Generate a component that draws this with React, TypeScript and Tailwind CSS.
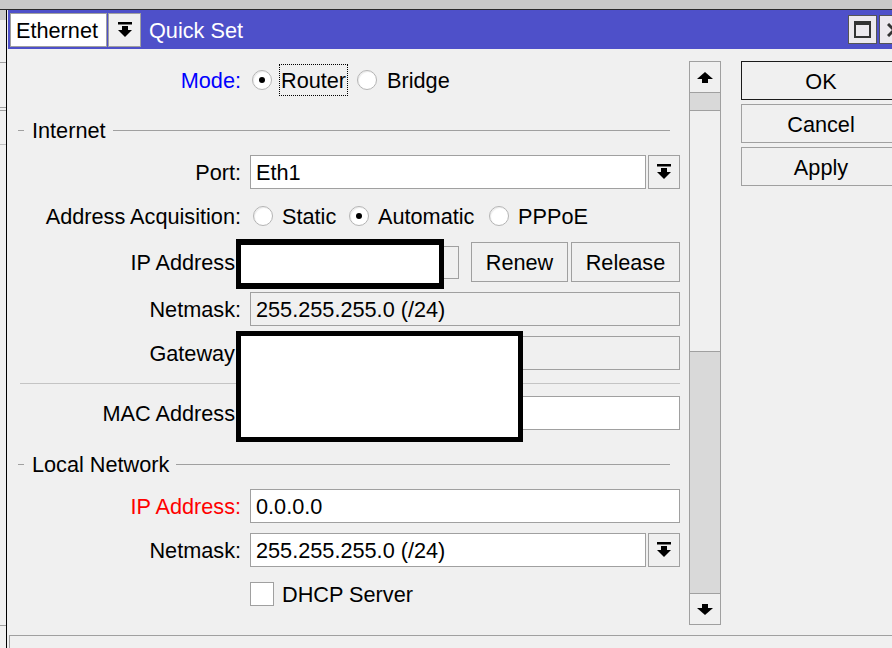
import React from "react";

function DropIcon() {
  return (
    <svg width="14" height="16" viewBox="0 0 14 16">
      <rect x="0" y="0" width="14" height="2.5" fill="#000" />
      <rect x="4" y="4" width="6" height="4" fill="#000" />
      <polygon points="0,8 14,8 7,15" fill="#000" />
    </svg>
  );
}

function ArrowUp() {
  return (
    <svg width="16" height="11" viewBox="0 0 16 11">
      <polygon points="0,7 8,0 16,7" fill="#000" />
      <rect x="5" y="7" width="6" height="4" fill="#000" />
    </svg>
  );
}

function ArrowDown() {
  return (
    <svg width="16" height="11" viewBox="0 0 16 11">
      <rect x="5" y="0" width="6" height="4" fill="#000" />
      <polygon points="0,4 16,4 8,11" fill="#000" />
    </svg>
  );
}

// text sits 1px low in winbox compared to centered line box
function T({ children, className = "" }: { children: React.ReactNode; className?: string }) {
  return <span className={`relative top-px whitespace-nowrap ${className}`}>{children}</span>;
}

function Radio({ checked }: { checked?: boolean }) {
  return (
    <div className="w-[20px] h-[20px] shrink-0 rounded-full border border-[#b4b4b4] bg-white flex items-center justify-center shadow-[inset_1px_1px_1px_rgba(0,0,0,0.08)]">
      {checked && <div className="w-[6px] h-[6px] rounded-full bg-black" />}
    </div>
  );
}

function Row({
  label,
  color = "text-black",
  h = "h-[34px]",
  mt,
  children,
}: {
  label?: string;
  color?: string;
  h?: string;
  mt: string;
  children: React.ReactNode;
}) {
  return (
    <div className={`flex items-center shrink-0 ${h} ${mt}`}>
      <div className={`w-[234px] shrink-0 text-right ${color}`}>
        <T>{label}</T>
      </div>
      <div className="ml-[9px] w-[430px] shrink-0 h-full flex items-center">{children}</div>
    </div>
  );
}

function Input({ value, disabled, className = "" }: { value?: string; disabled?: boolean; className?: string }) {
  return (
    <div
      className={`h-full shrink-0 border border-[#a0a0a0] pl-[5px] flex items-center ${
        disabled ? "bg-[#f0f0f0]" : "bg-white"
      } ${className}`}
    >
      {value && <T>{value}</T>}
    </div>
  );
}

function DropBtn() {
  return (
    <div className="ml-[2px] w-[32px] shrink-0 h-full border border-[#a0a0a0] bg-[#f0f0f0] flex items-center justify-center">
      <DropIcon />
    </div>
  );
}

function GroupHeader({ title, mt }: { title: string; mt: string }) {
  return (
    <div className={`flex items-center h-[24px] shrink-0 pl-[11px] mr-[19px] ${mt}`}>
      <div className="w-[6px] h-px bg-[#a0a0a0]" />
      <T className="ml-[8px]">{title}</T>
      <div className="ml-[7px] flex-1 h-px bg-[#a0a0a0]" />
    </div>
  );
}

function Form() {
  return (
    <div className="w-[682px] shrink-0 h-full flex flex-col">
      <Row label="Mode:" color="text-[#0000ff]" h="h-[32px]" mt="mt-[15px]">
        <div className="w-[107px] shrink-0 h-full flex items-center">
          <div className="ml-[2px]">
            <Radio checked />
          </div>
          <div className="ml-[7px] h-full px-[1px] flex items-center border border-dotted border-black">
            <T>Router</T>
          </div>
        </div>
        <Radio />
        <T className="ml-[10px]">Bridge</T>
      </Row>

      <GroupHeader title="Internet" mt="mt-[22px]" />

      <Row label="Port:" mt="mt-[13px]">
        <Input value="Eth1" className="w-[396px]" />
        <DropBtn />
      </Row>

      <Row label="Address Acquisition:" h="h-[24px]" mt="mt-[15px]">
        <div className="w-[99px] shrink-0 flex items-center">
          <div className="ml-[3px]">
            <Radio />
          </div>
          <T className="ml-[9px]">Static</T>
        </div>
        <div className="w-[140px] shrink-0 flex items-center">
          <Radio checked />
          <T className="ml-[9px]">Automatic</T>
        </div>
        <Radio />
        <T className="ml-[9px]">PPPoE</T>
      </Row>

      <Row label="IP Address:" h="h-[40px]" mt="mt-[14px]">
        <Input disabled className="w-[209px] !h-[33px]" />
        <div className="ml-[12px] w-[97px] shrink-0 h-full border border-[#a0a0a0] bg-[#f0f0f0] flex items-center justify-center">
          <T>Renew</T>
        </div>
        <div className="ml-[3px] w-[109px] shrink-0 h-full border border-[#a0a0a0] bg-[#f0f0f0] flex items-center justify-center">
          <T>Release</T>
        </div>
      </Row>

      <Row label="Netmask:" mt="mt-[10px]">
        <Input disabled value="255.255.255.0 (/24)" className="w-full" />
      </Row>

      <Row label="Gateway:" mt="mt-[10px]">
        <Input disabled className="w-full" />
      </Row>

      <div className="mt-[13px] ml-[13px] w-[660px] h-px shrink-0 bg-[#c4c4c4]" />

      <Row label="MAC Address:" mt="mt-[12px]">
        <Input className="w-full" />
      </Row>

      <GroupHeader title="Local Network" mt="mt-[22px]" />

      <Row label="IP Address:" color="text-[#ff0000]" mt="mt-[13px]">
        <Input value="0.0.0.0" className="w-full" />
      </Row>

      <Row label="Netmask:" mt="mt-[10px]">
        <Input value="255.255.255.0 (/24)" className="w-[396px]" />
        <DropBtn />
      </Row>

      <Row h="h-[24px]" mt="mt-[15px]">
        <div className="w-[24px] h-[24px] shrink-0 border border-[#a0a0a0] bg-white" />
        <T className="ml-[8px]">DHCP Server</T>
      </Row>
    </div>
  );
}

function ScrollBar() {
  return (
    <div className="mt-[12px] w-[32px] h-[564px] shrink-0 border border-[#a0a0a0] flex flex-col">
      <div className="h-[31px] shrink-0 border-b border-[#a0a0a0] bg-[#f0f0f0] flex items-center justify-center">
        <ArrowUp />
      </div>
      <div className="h-[17px] shrink-0 bg-[#d9d9d9]" />
      <div className="h-[242px] shrink-0 border-y border-[#a0a0a0] bg-[#f0f0f0]" />
      <div className="flex-1 bg-[#d9d9d9]" />
      <div className="h-[31px] shrink-0 border-t border-[#a0a0a0] bg-[#f0f0f0] flex items-center justify-center">
        <ArrowDown />
      </div>
    </div>
  );
}

function SideButtons() {
  const btn = "w-[160px] h-[39px] bg-[#f0f0f0] flex items-center justify-center";
  return (
    <div className="ml-[20px] mt-[12px] flex flex-col gap-[4px] shrink-0">
      <div className={`${btn} border border-[#1a1a1a]`}>
        <T>OK</T>
      </div>
      <div className={`${btn} border border-[#a0a0a0]`}>
        <T>Cancel</T>
      </div>
      <div className={`${btn} border border-[#a0a0a0]`}>
        <T>Apply</T>
      </div>
    </div>
  );
}

function TitleBar() {
  return (
    <div className="ml-px h-[39px] shrink-0 bg-[#4e50c9] flex items-center">
      <div className="ml-[2px] w-[97px] shrink-0 h-[34px] bg-white border border-[#a0a0a0] pl-[5px] flex items-center">
        <T>Ethernet</T>
      </div>
      <div className="ml-[1px] w-[33px] shrink-0 h-[34px] bg-[#f0f0f0] border border-[#a0a0a0] flex items-center justify-center">
        <DropIcon />
      </div>
      <T className="ml-[8px] text-white">Quick Set</T>
      <div className="ml-auto w-[29px] h-[29px] shrink-0 bg-[#ece9ee] border border-[#555] flex items-center justify-center">
        <div className="w-[17px] h-[17px] border-2 border-t-[4px] border-[#333]" />
      </div>
      <div className="ml-[2px] -mr-[16px] w-[29px] h-[29px] shrink-0 bg-[#ece9ee] border border-[#555] flex items-center justify-center">
        <svg width="14" height="14" viewBox="0 0 14 14">
          <path d="M1 1 L13 13 M13 1 L1 13" stroke="#333" strokeWidth="3" />
        </svg>
      </div>
    </div>
  );
}

function LeftStrip() {
  return (
    <div className="w-[6px] shrink-0 flex flex-col bg-[#f0f0f0]">
      <div className="h-[10px] bg-[#c9c9c9]" />
      <div className="h-[43px] border-b border-[#a0a0a0]" />
      <div className="h-[45px] border-b border-[#a0a0a0]" />
      <div className="h-[3px] border-b border-[#a0a0a0]" />
      <div className="h-[34px] border-b border-[#c0c0c0]" />
      <div className="h-[481px] border-b border-[#a0a0a0]" />
      <div className="flex-1" />
    </div>
  );
}

export default function App() {
  return (
    <div className="relative w-[892px] h-[648px] overflow-hidden bg-[#f0f0f0] text-[21.7px] leading-none text-black [font-family:'Liberation_Sans',Arial,sans-serif] flex flex-col">
      <div className="h-[9px] shrink-0 bg-[#c9c9c9] border-b border-[#2b2b2b] box-content" />
      <div className="flex flex-1 min-h-0">
        <LeftStrip />
        <div className="flex-1 min-w-0 flex flex-col border-l border-black">
          <TitleBar />
          <div className="h-[586px] shrink-0 flex items-start">
            <Form />
            <ScrollBar />
            <SideButtons />
          </div>
          <div className="flex-1 ml-[2px] border-t border-l border-[#a0a0a0]" />
        </div>
      </div>

      {/* redactions */}
      <div className="absolute left-[236px] top-[239px] w-[208px] h-[50px] border-[5px] border-y-[6px] border-black bg-white" />
      <div className="absolute left-[236px] top-[331px] w-[287px] h-[111px] border-[5px] border-black bg-white" />
    </div>
  );
}
